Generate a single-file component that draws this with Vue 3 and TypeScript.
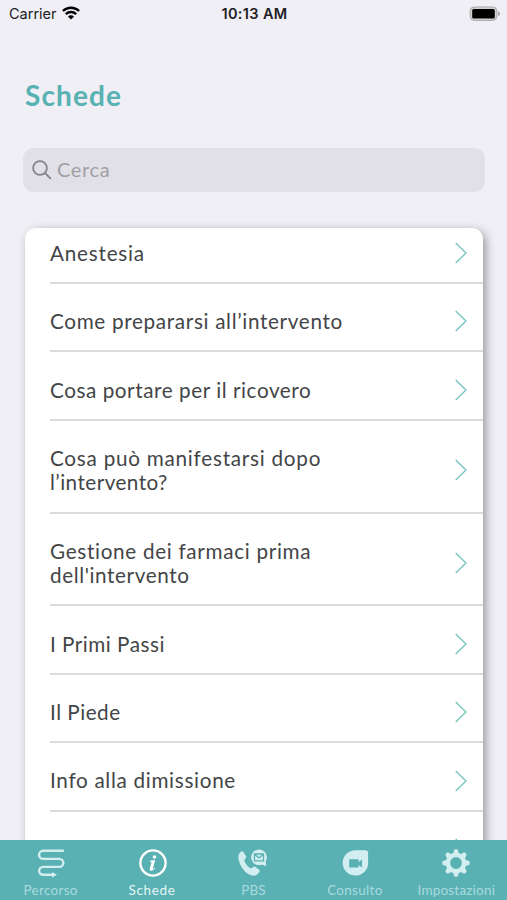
<script setup lang="ts">
import { ref } from 'vue'

interface Line { text: string; spacing: number }
interface Card { id: number; lines: Line[] }
interface Tab { id: string; label: string; spacing: number }

const cards: Card[] = [
  { id: 1, lines: [{ text: 'Anestesia', spacing: 0.78 }] },
  { id: 2, lines: [{ text: 'Come prepararsi all’intervento', spacing: 0.67 }] },
  { id: 3, lines: [{ text: 'Cosa portare per il ricovero', spacing: 0.56 }] },
  {
    id: 4,
    lines: [
      { text: 'Cosa può manifestarsi dopo', spacing: 0.75 },
      { text: 'l’intervento?', spacing: 0.45 },
    ],
  },
  {
    id: 5,
    lines: [
      { text: 'Gestione dei farmaci prima', spacing: 0.69 },
      { text: "dell'intervento", spacing: 0.6 },
    ],
  },
  { id: 6, lines: [{ text: 'I Primi Passi', spacing: 0.5 }] },
  { id: 7, lines: [{ text: 'Il Piede', spacing: 0.5 }] },
  { id: 8, lines: [{ text: 'Info alla dimissione', spacing: 0.69 }] },
  { id: 9, lines: [] },
]

const tabs: Tab[] = [
  { id: 'percorso', label: 'Percorso', spacing: 0.3 },
  { id: 'schede', label: 'Schede', spacing: 0.65 },
  { id: 'pbs', label: 'PBS', spacing: 0.1 },
  { id: 'consulto', label: 'Consulto', spacing: 0.3 },
  { id: 'impostazioni', label: 'Impostazioni', spacing: 0.2 },
]

const active = ref('schede')
const query = ref('')
const teeth = [0, 45, 90, 135, 180, 225, 270, 315]
</script>

<template>
  <div class="screen">
    <header class="status">
      <div class="carrier">
        <span>Carrier</span>
        <svg class="wifi" viewBox="0 0 18 14">
          <path d="M.9 5a11.700 11.700 0 0 1 16.200 0" />
          <path d="M3.800 8.100a7.500 7.500 0 0 1 10.400 0" />
          <path class="solid" d="M9 13.600 5.900 10.500a4.400 4.400 0 0 1 6.200 0z" />
        </svg>
      </div>
      <div class="clock">10:13 AM</div>
      <svg class="battery" viewBox="0 0 32 16">
        <rect x="1.200" y="1" width="26.600" height="13.400" rx="4" fill="#d2d2d3" stroke="#a9a9aa" />
        <rect x="3.200" y="3" width="22.600" height="9.400" rx="1.500" fill="#000" />
        <path d="M29 5.200q2 .8 2 2.500t-2 2.500z" fill="#a2a2a3" />
      </svg>
    </header>

    <h1 class="title">Schede</h1>

    <label class="search">
      <svg viewBox="0 0 20 20">
        <circle cx="8" cy="8" r="6.900" />
        <path d="m13 13 5.400 5.400" />
      </svg>
      <input v-model="query" type="text" placeholder="Cerca" />
    </label>

    <main class="viewport">
      <ul class="list">
        <li v-for="card in cards" :key="card.id" class="row">
          <div class="name">
            <div
              v-for="line in card.lines"
              :key="line.text"
              :style="{ letterSpacing: line.spacing + 'px' }"
            >{{ line.text }}</div>
          </div>
          <svg class="chevron" viewBox="0 0 12 22"><path d="m.7 1 10.300 10L.7 21" /></svg>
        </li>
      </ul>
    </main>

    <nav class="tabs">
      <button
        v-for="tab in tabs"
        :key="tab.id"
        class="tab"
        :class="{ active: active === tab.id }"
        @click="active = tab.id"
      >
        <svg v-if="tab.id === 'percorso'" class="icon" viewBox="0 0 30 30">
          <path class="line route" d="M27 2.800H7.100a4.050 4.050 0 0 0 0 8.100H23.300a4 4 0 0 1 0 8H7.100a3.950 3.950 0 0 0 0 7.900H17" />
          <path d="M16 24l5 2.800-5 2.700z" />
        </svg>
        <svg v-else-if="tab.id === 'schede'" class="icon" viewBox="0 0 30 30">
          <circle class="line" cx="16" cy="15" r="12.600" />
          <circle cx="17.500" cy="9" r="1.800" />
          <path d="M13 12.700l5.200-.8-2.400 8.700q-.2 1.100 2-.8l.5.500q-2.100 2.400-3.900 2.400-2.200 0-1.600-2.300l1.600-5.600q.3-1-1.500-1.200z" />
        </svg>
        <svg v-else-if="tab.id === 'pbs'" class="icon" viewBox="0 0 30 30">
          <path d="M1.600 4.800Q3.400 2.200 5.200 3.800l2.900 4.400q.5 1.300-1.300 3-.9 1.200.4 3.600 2.300 4 4.800 5.200 1.300.7 2.400-.6 1.400-1.400 2.700-.6l3.800 2.700q1.600 1.400 0 3.200-2.900 3.700-7.100 2.900Q6.500 25.500 2.100 16.200-1.200 9 1.600 4.800z" />
          <circle cx="21" cy="9.300" r="7.900" />
          <path d="m22.500 16 5.800 2.200-.8-6z" />
          <path class="cut" d="M16.500 6h9v6.800h-9zM16.500 6.200 21 9.900l4.500-3.700" />
        </svg>
        <svg v-else-if="tab.id === 'consulto'" class="icon" viewBox="0 0 30 30">
          <path d="M15.500 2.200h10q2.600 0 2.600 2.600V15A12.700 12.700 0 1 1 15.500 2.200z" />
          <path class="hole" d="M9.200 11.200h9.400v2.700l3.500-2.500v8l-3.500-2.500v2.700H9.200z" />
        </svg>
        <svg v-else class="icon" viewBox="0 0 30 30">
          <circle cx="15" cy="15" r="8.100" fill="none" stroke="currentColor" stroke-width="4.400" />
          <path
            v-for="angle in teeth"
            :key="angle"
            d="M11.800 6 13.100 2.200q.2-.9 1-.9h1.800q.8 0 1 .9L18.200 6z"
            :transform="`rotate(${angle} 15 15)`"
          />
        </svg>
        <span :style="{ letterSpacing: tab.spacing + 'px' }">{{ tab.label }}</span>
      </button>
    </nav>
  </div>
</template>

<style>
body {
  margin: 0;
}
</style>

<style scoped>
.screen {
  display: flex;
  flex-direction: column;
  width: 100%;
  height: 900px;
  overflow: hidden;
  background: #f0eff5;
  font-family: Lato, "Open Sans", sans-serif;
}
.status {
  display: grid;
  grid-template-columns: 1fr auto 1fr;
  align-items: center;
  box-sizing: border-box;
  height: 28px;
  padding: 0 7px 1px 9px;
  color: #202024;
  font-family: Inter, sans-serif;
  font-size: 14.500px;
}
.carrier {
  display: flex;
  align-items: center;
  gap: 5px;
}
.wifi {
  width: 18px;
  height: 14px;
  margin-top: -2px;
  fill: none;
  stroke: #000;
  stroke-width: 2.300;
}
.wifi .solid {
  fill: #000;
  stroke: none;
}
.clock {
  font-weight: 600;
  letter-spacing: 0.35px;
}
.battery {
  justify-self: end;
  width: 32px;
  height: 16px;
  margin-right: -1px;
}
.title {
  margin: 50px 0 0 25px;
  color: #58b1b3;
  font-size: 28px;
  font-weight: 700;
  line-height: 34px;
  letter-spacing: 1.100px;
}
.search {
  display: flex;
  flex-shrink: 0;
  align-items: center;
  gap: 5px;
  box-sizing: border-box;
  height: 44px;
  margin: 36px 22px 0 23px;
  padding: 0 9px;
  border-radius: 11px;
  background: #e1e0e6;
}
.search svg {
  width: 20px;
  height: 20px;
  fill: none;
  stroke: #85858b;
  stroke-width: 1.800;
  stroke-linecap: round;
}
.search input {
  flex: 1;
  min-width: 0;
  padding: 0 0 3px;
  border: 0;
  outline: 0;
  background: none;
  color: #3d3e40;
  font: 20px/24px Lato, sans-serif;
  letter-spacing: 0.650px;
}
.search input::placeholder {
  color: #a09fa5;
  opacity: 1;
}
.viewport {
  flex: 1;
  min-height: 0;
  padding: 36px 24px 0 25px;
  overflow: hidden;
}
.list {
  margin: 0;
  padding: 0;
  border-radius: 11px 11px 0 0;
  background: #fff;
  box-shadow: 3px 3px 10px rgba(60, 60, 70, 0.480);
  list-style: none;
}
.row {
  display: flex;
  align-items: center;
  justify-content: space-between;
  box-sizing: border-box;
  margin-left: 25px;
  padding: 25.250px 16px 16.900px 0;
  border-bottom: 2px solid #dadbdc;
}
.row:first-child {
  padding-top: 12.800px;
}
.name {
  min-height: 24.300px;
  color: #434547;
  font-size: 20.700px;
  line-height: 24.300px;
  white-space: pre;
}
.chevron {
  width: 12px;
  height: 22px;
  margin: -4px 0;
  fill: none;
  stroke: #72c3bd;
  stroke-width: 1.300;
}
.tabs {
  display: grid;
  flex-shrink: 0;
  grid-template-columns: repeat(5, 1fr);
  height: 60px;
  background: #59b1b3;
}
.tab {
  display: flex;
  flex-direction: column;
  align-items: center;
  gap: 4px;
  padding: 8px 0 0;
  border: 0;
  background: none;
  color: #d3eef1;
  font: 13.500px/16px Lato, sans-serif;
}
.tab span {
  color: #a9dadd;
}
.tab.active {
  color: #fff;
}
.tab.active span {
  color: #e6f6f7;
}
.icon {
  width: 30px;
  height: 30px;
  fill: currentColor;
}
.line {
  fill: none;
  stroke: currentColor;
  stroke-width: 2.400;
}
.route {
  stroke-linecap: round;
}
.cut {
  fill: none;
  stroke: #59b1b3;
  stroke-width: 1.300;
}
.hole {
  fill: #59b1b3;
}
</style>
